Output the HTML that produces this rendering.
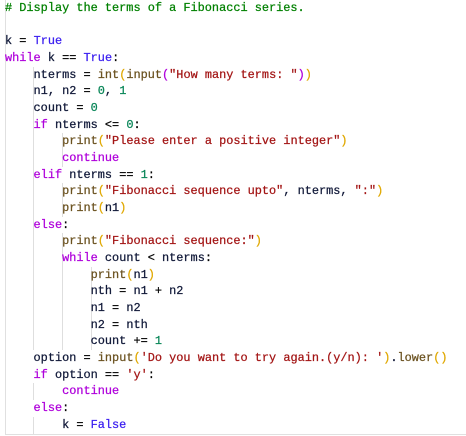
<!DOCTYPE html><html><head><style>
body{margin:0;background:#fff;width:466px;height:436px;overflow:hidden;position:relative}
.b{position:absolute;left:5px;top:0;width:1px;height:435px;background:#e0e0e0}
.bb{position:absolute;left:5px;top:434px;width:461px;height:1px;background:#e0e0e0}
.g{position:absolute;width:1px;background:#dedede}
pre{margin:0;position:absolute;left:5px;top:0;font-family:"Liberation Mono",monospace;font-size:11.9px;line-height:16.67px;color:#101838;-webkit-text-stroke:0.25px currentColor}
.c{color:#008000}.k{color:#af00db}.t{color:#3a1ef0}.s{color:#a31515}.n{color:#098658}.f{color:#6b5220}.y{color:#e0a800}.o{color:#000}
</style></head><body>
<div class="b"></div><div class="bb"></div>
<div class="g" style="left:33px;top:67px;height:283px"></div>
<div class="g" style="left:62px;top:133px;height:34px"></div>
<div class="g" style="left:62px;top:183px;height:34px"></div>
<div class="g" style="left:62px;top:233px;height:117px"></div>
<div class="g" style="left:91px;top:267px;height:83px"></div>
<div class="g" style="left:33px;top:383px;height:17px"></div>
<div class="g" style="left:33px;top:417px;height:17px"></div>
<pre><span class="c"># Display the terms of a Fibonacci series.</span>

k <span class="o">=</span> <span class="t">True</span>
<span class="k">while</span> k <span class="o">==</span> <span class="t">True</span><span class="o">:</span>
    nterms <span class="o">=</span> <span class="f">int</span><span class="y">(</span><span class="f">input</span><span class="k">(</span><span class="s">"How many terms: "</span><span class="k">)</span><span class="y">)</span>
    n1, n2 <span class="o">=</span> <span class="n">0</span>, <span class="n">1</span>
    count <span class="o">=</span> <span class="n">0</span>
    <span class="k">if</span> nterms <span class="o">&lt;=</span> <span class="n">0</span><span class="o">:</span>
        <span class="f">print</span><span class="y">(</span><span class="s">"Please enter a positive integer"</span><span class="y">)</span>
        <span class="k">continue</span>
    <span class="k">elif</span> nterms <span class="o">==</span> <span class="n">1</span><span class="o">:</span>
        <span class="f">print</span><span class="y">(</span><span class="s">"Fibonacci sequence upto"</span>, nterms, <span class="s">":"</span><span class="y">)</span>
        <span class="f">print</span><span class="y">(</span>n1<span class="y">)</span>
    <span class="k">else</span><span class="o">:</span>
        <span class="f">print</span><span class="y">(</span><span class="s">"Fibonacci sequence:"</span><span class="y">)</span>
        <span class="k">while</span> count <span class="o">&lt;</span> nterms<span class="o">:</span>
            <span class="f">print</span><span class="y">(</span>n1<span class="y">)</span>
            nth <span class="o">=</span> n1 <span class="o">+</span> n2
            n1 <span class="o">=</span> n2
            n2 <span class="o">=</span> nth
            count <span class="o">+=</span> <span class="n">1</span>
    option <span class="o">=</span> <span class="f">input</span><span class="y">(</span><span class="s">'Do you want to try again.(y/n): '</span><span class="y">)</span>.<span class="f">lower</span><span class="y">()</span>
    <span class="k">if</span> option <span class="o">==</span> <span class="s">'y'</span><span class="o">:</span>
        <span class="k">continue</span>
    <span class="k">else</span><span class="o">:</span>
        k <span class="o">=</span> <span class="t">False</span></pre>
</body></html>
